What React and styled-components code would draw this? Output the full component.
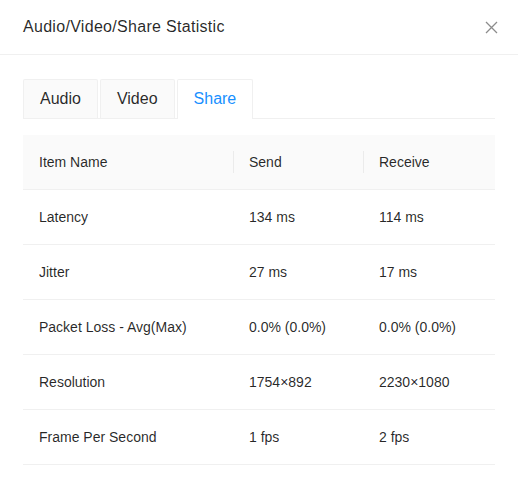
import React, { useState } from 'react';
import styled, { createGlobalStyle } from 'styled-components';

const GlobalStyle = createGlobalStyle`
  html, body {
    margin: 0;
    padding: 0;
    background: #fff;
  }
  body {
    font-family: "Liberation Sans", Arial, sans-serif;
    color: rgba(0, 0, 0, 0.85);
  }
`;

const Modal = styled.div`
  width: 518px;
  background: #fff;
`;

const ModalHeader = styled.div`
  display: flex;
  align-items: center;
  justify-content: space-between;
  padding: 16px 16px 16px 23px;
  border-bottom: 1px solid #f0f0f0;
`;

const Title = styled.div`
  font-size: 16px;
  line-height: 22px;
  letter-spacing: 0.3px;
  color: rgba(0, 0, 0, 0.85);
`;

const CloseButton = styled.button`
  display: flex;
  align-items: center;
  justify-content: center;
  width: 22px;
  height: 22px;
  padding: 0;
  border: none;
  background: transparent;
  color: rgba(0, 0, 0, 0.45);
  cursor: pointer;
`;

const ModalBody = styled.div`
  padding: 24px 23px;
`;

const TabBar = styled.div`
  display: flex;
  gap: 2px;
  border-bottom: 1px solid #f0f0f0;
  margin-bottom: 16px;
`;

const Tab = styled.div`
  padding: 8px 16px;
  font-size: 16px;
  line-height: 22px;
  border: 1px solid #f0f0f0;
  border-bottom: none;
  border-radius: 2px 2px 0 0;
  margin-bottom: ${(p) => (p.$active ? '-1px' : '0')};
  padding-bottom: ${(p) => (p.$active ? '9px' : '8px')};
  background: ${(p) => (p.$active ? '#fff' : '#fafafa')};
  color: ${(p) => (p.$active ? '#1890ff' : 'rgba(0, 0, 0, 0.85)')};
  cursor: pointer;
`;

const Table = styled.table`
  width: 100%;
  border-collapse: collapse;
  table-layout: fixed;
  font-size: 14px;
`;

const HeadCell = styled.th`
  position: relative;
  text-align: left;
  font-weight: normal;
  padding: 16px;
  line-height: 22px;
  background: #fafafa;
  border-bottom: 1px solid #f0f0f0;
  color: rgba(0, 0, 0, 0.85);

  &:not(:first-child)::before {
    content: '';
    position: absolute;
    left: 0;
    top: 50%;
    transform: translateY(-50%);
    width: 1px;
    height: 22px;
    background: rgba(0, 0, 0, 0.06);
  }
`;

const Cell = styled.td`
  padding: 16px;
  line-height: 22px;
  border-bottom: 1px solid #f0f0f0;
  color: rgba(0, 0, 0, 0.85);
`;

const rows = [
  { name: 'Latency', send: '134 ms', receive: '114 ms' },
  { name: 'Jitter', send: '27 ms', receive: '17 ms' },
  { name: 'Packet Loss - Avg(Max)', send: '0.0% (0.0%)', receive: '0.0% (0.0%)' },
  { name: 'Resolution', send: '1754×892', receive: '2230×1080' },
  { name: 'Frame Per Second', send: '1 fps', receive: '2 fps' },
];

const CloseIcon = () => (
  <svg width="13" height="13" viewBox="0 0 13 13" fill="none">
    <path d="M1 1L12 12M12 1L1 12" stroke="currentColor" strokeWidth="1.3" />
  </svg>
);

export default function App() {
  const [tab, setTab] = useState('Share');

  return (
    <>
      <GlobalStyle />
      <Modal>
        <ModalHeader>
          <Title>Audio/Video/Share Statistic</Title>
          <CloseButton aria-label="close">
            <CloseIcon />
          </CloseButton>
        </ModalHeader>
        <ModalBody>
          <TabBar>
            {['Audio', 'Video', 'Share'].map((t) => (
              <Tab key={t} $active={tab === t} onClick={() => setTab(t)}>
                {t}
              </Tab>
            ))}
          </TabBar>
          <Table>
            <colgroup>
              <col style={{ width: 210 }} />
              <col style={{ width: 130 }} />
              <col />
            </colgroup>
            <thead>
              <tr>
                <HeadCell>Item Name</HeadCell>
                <HeadCell>Send</HeadCell>
                <HeadCell>Receive</HeadCell>
              </tr>
            </thead>
            <tbody>
              {rows.map((r) => (
                <tr key={r.name}>
                  <Cell>{r.name}</Cell>
                  <Cell>{r.send}</Cell>
                  <Cell>{r.receive}</Cell>
                </tr>
              ))}
            </tbody>
          </Table>
        </ModalBody>
      </Modal>
    </>
  );
}
